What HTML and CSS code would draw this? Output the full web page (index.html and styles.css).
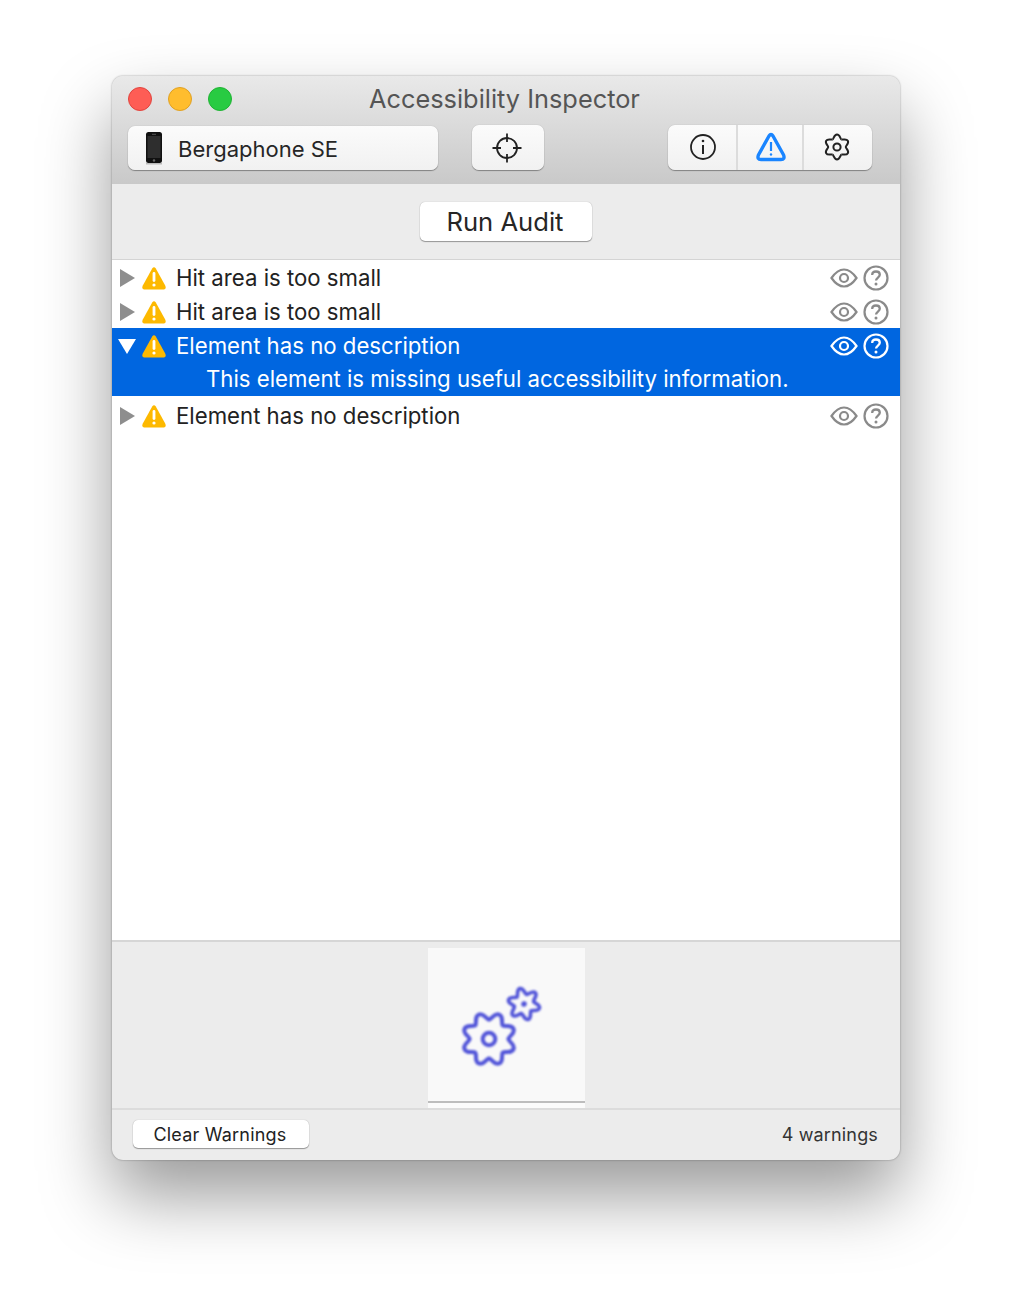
FILE: index.html
```html
<!DOCTYPE html>
<html lang="en">
<head>
<meta charset="utf-8">
<title>Accessibility Inspector</title>
<link rel="stylesheet" href="styles.css">
</head>
<body>
<svg class="defs" width="0" height="0" aria-hidden="true">
  <defs>
    <symbol id="warn" viewBox="0 0 24 24">
      <path d="M10.2 2.500 Q12 0 13.800 2.500 L23.200 19.500 Q24.800 23.500 20.800 23.500 H3.200 Q-0.800 23.500 0.800 19.500 Z" fill="#fdb900"/>
      <path d="M12 7.500 V14.500" stroke="#fff" stroke-width="2.800" stroke-linecap="round"/>
      <circle cx="12" cy="19" r="1.600" fill="#fff"/>
    </symbol>
    <symbol id="eye" viewBox="0 0 28 20">
      <path d="M1.500 10 C6 3.500 10 1.500 14 1.500 C18 1.500 22 3.500 26.500 10 C22 16.500 18 18.500 14 18.500 C10 18.500 6 16.500 1.500 10 Z" fill="none" stroke="currentColor" stroke-width="2.200"/>
      <circle cx="14" cy="10" r="4" fill="none" stroke="currentColor" stroke-width="2.200"/>
    </symbol>
    <symbol id="help" viewBox="0 0 26 26">
      <circle cx="13" cy="13" r="11.500" fill="none" stroke="currentColor" stroke-width="2.200"/>
      <path d="M9.200 10 C9.200 7.700 11 6.500 13 6.500 C15.200 6.500 16.800 7.900 16.800 9.800 C16.800 12.500 13 12.700 13 15.600" fill="none" stroke="currentColor" stroke-width="2.300"/>
      <circle cx="13" cy="19" r="1.500" fill="currentColor"/>
    </symbol>
    <path id="lobe8" d="M0 -19.500 C3 -19.500 5.060 -26.590 10.140 -24.480 C15.220 -22.370 11.670 -15.910 13.790 -13.790" fill="none"/>
    <path id="lobe6" d="M0 -10 C2 -10 4.710 -15.760 8 -13.860 C11.290 -11.960 7.660 -6.730 8.660 -5" fill="none"/>
    <path id="cog6" d="M0 -8.800 C1.500 -8.800 3.650 -12.330 6.250 -10.830 C8.850 -9.330 6.870 -5.700 7.620 -4.400" fill="none"/>
  </defs>
</svg>

<main class="window">
  <header class="titlebar">
    <div class="title-row">
      <div class="lights">
        <span class="light light-red"></span>
        <span class="light light-yellow"></span>
        <span class="light light-green"></span>
      </div>
      <h1 class="title">Accessibility Inspector</h1>
    </div>
    <div class="toolbar">
      <div class="device tool">
        <svg class="phone" width="20" height="34" viewBox="0 0 20 34">
          <rect x="2" y="1" width="16" height="31" rx="2.500" fill="#111"/>
          <rect x="3.500" y="5" width="13" height="22" fill="#2e2e2e"/>
          <rect x="8" y="2.800" width="4" height="1" fill="#555"/>
          <circle cx="10" cy="29.500" r="1.200" fill="#666"/>
          <rect x="2" y="32" width="16" height="1.500" fill="#bbb"/>
        </svg>
        <span>Bergaphone SE</span>
      </div>
      <button class="tool target" type="button" aria-label="Target">
        <svg width="30" height="30" viewBox="0 0 30 30" fill="none" stroke="#222" stroke-width="1.800">
          <circle cx="15" cy="15" r="10"/>
          <path d="M15 0.500 V9 M15 21 V29.500 M0.500 15 H9 M21 15 H29.500"/>
        </svg>
      </button>
      <div class="segments tool">
        <button class="segment seg-info" type="button" aria-label="Info">
          <svg width="28" height="28" viewBox="0 0 28 28" fill="none" stroke="#222" stroke-width="1.800">
            <circle cx="14" cy="14" r="12"/>
            <path d="M14 12 V21" stroke-width="2"/>
            <circle cx="14" cy="8" r="1.300" fill="#222" stroke="none"/>
          </svg>
        </button>
        <button class="segment seg-warn" type="button" aria-label="Warnings">
          <svg width="32" height="32" viewBox="0 0 32 32" fill="none" stroke="#1a85ff" stroke-width="3.400" stroke-linejoin="round">
            <path d="M14 5 Q16 2 18 5 L28.600 24 Q30.200 28.500 26 28.500 H6 Q1.800 28.500 3.400 24 Z"/>
            <path d="M16 11 V20" stroke-width="2.200"/>
            <circle cx="16" cy="23.500" r="1.200" fill="#1a85ff" stroke="none"/>
          </svg>
        </button>
        <button class="segment seg-gear" type="button" aria-label="Settings">
          <svg width="30" height="30" viewBox="-15 -15 30 30" fill="none" stroke="#222" stroke-width="2">
            <g transform="rotate(-30)">
              <use href="#cog6"/>
              <use href="#cog6" transform="rotate(60)"/>
              <use href="#cog6" transform="rotate(120)"/>
              <use href="#cog6" transform="rotate(180)"/>
              <use href="#cog6" transform="rotate(240)"/>
              <use href="#cog6" transform="rotate(300)"/>
            </g>
            <circle r="3.600"/>
          </svg>
        </button>
      </div>
    </div>
  </header>

  <section class="audit-bar">
    <button class="btn run" type="button">Run Audit</button>
  </section>

  <section class="list">
    <div class="row">
      <div class="row-main">
        <span class="tri tri-right"></span>
        <svg class="warn"><use href="#warn"/></svg>
        <span class="row-text">Hit area is too small</span>
        <svg class="eye"><use href="#eye"/></svg>
        <svg class="help"><use href="#help"/></svg>
      </div>
    </div>
    <div class="row">
      <div class="row-main">
        <span class="tri tri-right"></span>
        <svg class="warn"><use href="#warn"/></svg>
        <span class="row-text">Hit area is too small</span>
        <svg class="eye"><use href="#eye"/></svg>
        <svg class="help"><use href="#help"/></svg>
      </div>
    </div>
    <div class="row selected">
      <div class="row-main">
        <span class="tri tri-down"></span>
        <svg class="warn"><use href="#warn"/></svg>
        <span class="row-text">Element has no description</span>
        <svg class="eye"><use href="#eye"/></svg>
        <svg class="help"><use href="#help"/></svg>
      </div>
      <div class="row-detail">This element is missing useful accessibility information.</div>
    </div>
    <div class="row after-selected">
      <div class="row-main">
        <span class="tri tri-right"></span>
        <svg class="warn"><use href="#warn"/></svg>
        <span class="row-text">Element has no description</span>
        <svg class="eye"><use href="#eye"/></svg>
        <svg class="help"><use href="#help"/></svg>
      </div>
    </div>
  </section>

  <section class="preview">
    <div class="thumb">
      <svg class="gears" width="90" height="90" viewBox="0 0 90 90" fill="none" stroke="#5053d8" stroke-width="4" stroke-linecap="round">
        <g transform="translate(33 57)">
          <use href="#lobe8"/>
          <use href="#lobe8" transform="rotate(45)"/>
          <use href="#lobe8" transform="rotate(90)"/>
          <use href="#lobe8" transform="rotate(135)"/>
          <use href="#lobe8" transform="rotate(180)"/>
          <use href="#lobe8" transform="rotate(225)"/>
          <use href="#lobe8" transform="rotate(270)"/>
          <use href="#lobe8" transform="rotate(315)"/>
          <circle r="6.300"/>
        </g>
        <g transform="translate(68 22) rotate(15)" stroke-width="3.600">
          <use href="#lobe6"/>
          <use href="#lobe6" transform="rotate(60)"/>
          <use href="#lobe6" transform="rotate(120)"/>
          <use href="#lobe6" transform="rotate(180)"/>
          <use href="#lobe6" transform="rotate(240)"/>
          <use href="#lobe6" transform="rotate(300)"/>
          <circle r="2.800" fill="#5053d8" stroke="none"/>
        </g>
      </svg>
    </div>
  </section>

  <footer class="footer">
    <button class="btn clear" type="button">Clear Warnings</button>
    <span class="count">4 warnings</span>
  </footer>
</main>
</body>
</html>
```

FILE: styles.css
```css
* { box-sizing: border-box; }
html, body { margin: 0; padding: 0; background: #fff; }
body {
  width: 1012px;
  height: 1308px;
  padding: 76px 112px 0;
  font-family: Inter, "Noto Sans", "Liberation Sans", sans-serif;
  color: #222;
  overflow: hidden;
}
.defs { position: absolute; }
button { font: inherit; color: inherit; padding: 0; }

.window {
  width: 788px;
  height: 1084px;
  border-radius: 11px;
  overflow: hidden;
  display: flex;
  flex-direction: column;
  background: #ececec;
  box-shadow: 0 0 2px rgba(0,0,0,.4), 0 36px 70px rgba(0,0,0,.4);
}

.titlebar {
  height: 108px;
  flex: none;
  background: linear-gradient(#e9e9e9, #c9c9c9);
  display: flex;
  flex-direction: column;
  padding: 0 28px 0 16px;
}
.title-row {
  height: 50px;
  flex: none;
  display: flex;
  align-items: center;
  position: relative;
}
.lights { display: flex; gap: 16px; margin-top: -5px; }
.light { width: 24px; height: 24px; border-radius: 50%; }
.light-red { background: #fe5d55; border: 1px solid #e0443e; }
.light-yellow { background: #ffbd2e; border: 1px solid #dfa023; }
.light-green { background: #28cb42; border: 1px solid #1fb333; }
.title {
  position: absolute;
  left: 241px;
  top: 6px;
  margin: 0;
  font-size: 25.350px;
  line-height: 34px;
  font-weight: 400;
  color: #555;
  white-space: nowrap;
}
.toolbar { display: flex; align-items: flex-start; }
.tool {
  background: linear-gradient(#fbfbfb, #f1f1f1);
  border-radius: 7px;
  box-shadow: 0 0 1px rgba(0,0,0,.25), 0 1px 1px rgba(0,0,0,.35);
  border: 0;
}
.device {
  width: 310px;
  height: 44px;
  display: flex;
  align-items: center;
  gap: 14px;
  padding: 2px 0 0 16px;
  font-size: 22px;
  color: #262626;
}
.phone { flex: none; margin-top: -2px; }
.target {
  width: 72px;
  height: 45px;
  margin-left: 34px;
  margin-top: -1px;
  display: flex;
  align-items: center;
  justify-content: center;
}
.target svg { margin-left: -2px; }
.segments {
  margin-left: auto;
  margin-top: -1px;
  width: 204px;
  height: 45px;
  display: flex;
}
.segment {
  background: none;
  border: 0;
  display: flex;
  align-items: center;
  justify-content: center;
  height: 100%;
}
.seg-info { width: 70px; border-right: 2px solid #dcdcdc; padding-left: 2px; }
.seg-info svg { margin-top: -2px; }
.seg-warn { width: 66px; border-right: 2px solid #dcdcdc; padding-left: 2px; }
.seg-warn svg { margin-top: -1px; }
.seg-gear { flex: 1; padding-right: 2px; }
.seg-gear svg { margin-top: -2px; }

.audit-bar {
  height: 76px;
  flex: none;
  display: flex;
  justify-content: center;
  align-items: flex-start;
  padding-top: 17px;
  border-bottom: 1px solid #d4d4d4;
}
.btn {
  background: #fff;
  border: 0;
  border-radius: 5px;
  box-shadow: 0 0 1px rgba(0,0,0,.3), 0 1px 1px rgba(0,0,0,.35);
}
.run { width: 172px; height: 39px; margin-top: 1px; padding-right: 2px; font-size: 25.600px; color: #262626; }

.list { flex: 1; background: #fff; font-size: 22.200px; }
.row-main {
  height: 34px;
  display: flex;
  align-items: center;
  padding: 0 11px 0 8px;
  color: #222;
}
.tri { width: 0; height: 0; flex: none; margin-top: 2px; }
.tri-right {
  border-left: 15px solid #8e8e8e;
  border-top: 9px solid transparent;
  border-bottom: 9px solid transparent;
  margin-right: 7px;
}
.tri-down {
  border-top: 15px solid #fff;
  border-left: 9px solid transparent;
  border-right: 9px solid transparent;
  margin-left: -2px;
  margin-right: 6px;
}
.warn { width: 24px; height: 24px; flex: none; margin-top: 2px; margin-right: 10px; }
.row-text { flex: 1; white-space: nowrap; }
.eye { width: 28px; height: 20px; color: #8a8a8a; flex: none; margin-top: 2px; margin-right: 5px; }
.help { width: 26px; height: 26px; color: #8a8a8a; flex: none; margin-top: 2px; }
.selected { background: #0066e0; height: 68px; }
.selected .row-main, .selected .row-detail { color: #fff; }
.selected .eye, .selected .help { color: #fff; }
.row-detail { padding-left: 94px; line-height: 30px; margin-top: 2px; white-space: nowrap; }
.after-selected { margin-top: 2px; }

.preview {
  height: 168px;
  flex: none;
  border-top: 2px solid #d6d6d6;
  display: flex;
  justify-content: center;
  padding-top: 6px;
}
.thumb {
  width: 157px;
  height: 160px;
  margin-left: 1px;
  background: #f9f9f9;
  position: relative;
  display: flex;
}
.thumb::after {
  content: "";
  position: absolute;
  left: 0;
  right: 0;
  bottom: 0;
  height: 5px;
  background: #fbfbfb;
  border-top: 2px solid #bdbdbd;
}
.gears { margin: 34px 0 0 27.500px; filter: blur(.9px); }

.footer {
  height: 52px;
  flex: none;
  border-top: 2px solid #dcdcdc;
  display: flex;
  align-items: center;
  justify-content: space-between;
  padding: 0 22px 2px 21px;
}
.clear { width: 176px; height: 28px; font-size: 18px; letter-spacing: .2px; padding-right: 2px; color: #222; }
.count { font-size: 18px; color: #333; letter-spacing: .15px; }
```
